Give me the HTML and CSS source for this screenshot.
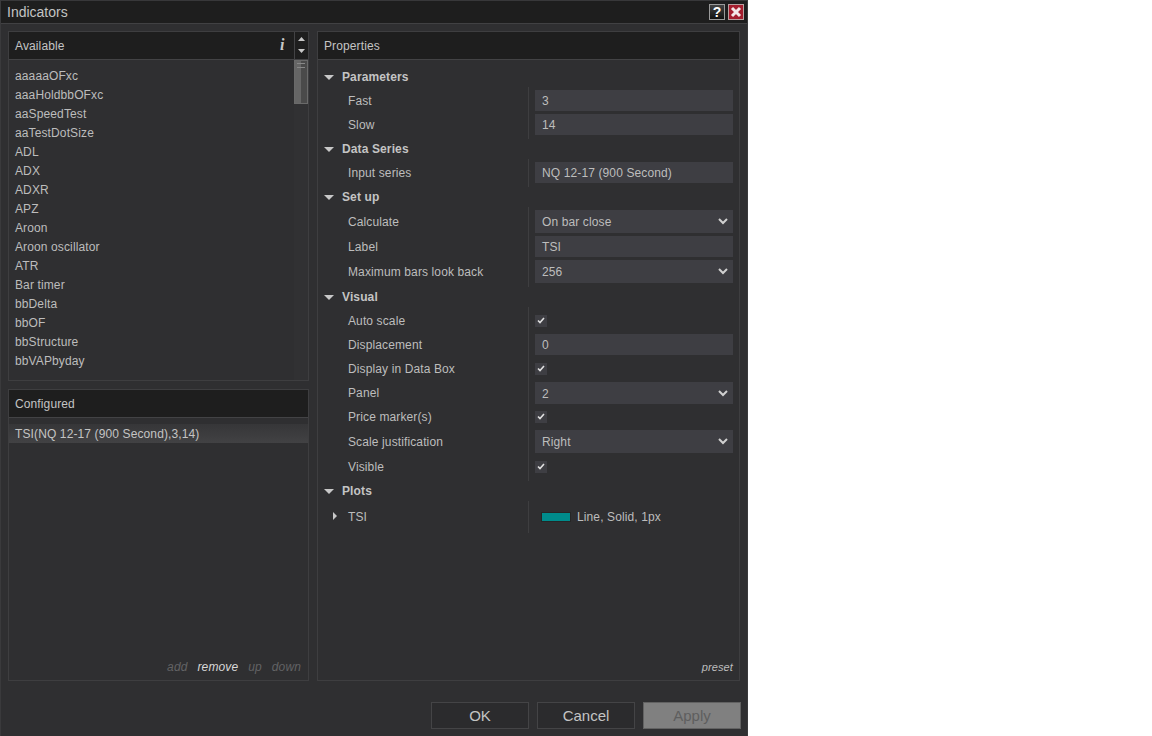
FILE: index.html
```html
<!DOCTYPE html>
<html lang="en">
<head>
    <meta charset="UTF-8">
    <title>Indicators</title>
    <link rel="stylesheet" href="styles.css">
</head>
<body>

<div class="window">
    <div class="titlebar">
        <span class="title">Indicators</span>
        <span class="title-btn help">?</span>
        <span class="title-btn close">
            <svg width="12" height="12" viewBox="0 0 12 12"><path d="M2 2 L10 10 M10 2 L2 10" stroke="#f4e8e8" stroke-width="3" fill="none"/></svg>
        </span>
    </div>

    <div class="main">
        <div class="left">
            <!-- Available -->
            <div class="panel available">
                <div class="panel-head">
                    <span class="head-label">Available</span>
                    <span class="info">i</span>
                    <span class="sort">
                        <svg width="7" height="4" viewBox="0 0 7 4"><path d="M0 4 L3.5 0 L7 4 Z" fill="#c8c8c8"/></svg>
                        <svg width="7" height="4" viewBox="0 0 7 4"><path d="M0 0 L3.5 4 L7 0 Z" fill="#c8c8c8"/></svg>
                    </span>
                </div>
                <div class="list-wrap">
                    <ul class="list">
                        <li>aaaaaOFxc</li>
                        <li>aaaHoldbbOFxc</li>
                        <li>aaSpeedTest</li>
                        <li>aaTestDotSize</li>
                        <li>ADL</li>
                        <li>ADX</li>
                        <li>ADXR</li>
                        <li>APZ</li>
                        <li>Aroon</li>
                        <li>Aroon oscillator</li>
                        <li>ATR</li>
                        <li>Bar timer</li>
                        <li>bbDelta</li>
                        <li>bbOF</li>
                        <li>bbStructure</li>
                        <li>bbVAPbyday</li>
                    </ul>
                    <div class="scroll-track"><div class="scroll-thumb"></div></div>
                </div>
            </div>

            <!-- Configured -->
            <div class="panel configured">
                <div class="panel-head"><span class="head-label">Configured</span></div>
                <div class="config-body">
                    <div class="config-row">TSI(NQ 12-17 (900 Second),3,14)</div>
                </div>
                <div class="actions">
                    <span class="off">add</span>
                    <span class="on">remove</span>
                    <span class="off">up</span>
                    <span class="off">down</span>
                </div>
            </div>
        </div>

        <!-- Properties -->
        <div class="panel props">
            <div class="panel-head"><span class="head-label">Properties</span></div>
            <div class="props-body">
                <div class="heading"><span class="caret"></span>Parameters</div>
                <div class="group">
                    <div class="row"><span class="name">Fast</span><div class="field">3</div></div>
                    <div class="row"><span class="name">Slow</span><div class="field">14</div></div>
                </div>

                <div class="heading"><span class="caret"></span>Data Series</div>
                <div class="group">
                    <div class="row"><span class="name">Input series</span><div class="field">NQ 12-17 (900 Second)</div></div>
                </div>

                <div class="heading"><span class="caret"></span>Set up</div>
                <div class="group">
                    <div class="row tall"><span class="name">Calculate</span><div class="field select">On bar close<svg class="chev" width="10" height="7" viewBox="0 0 10 7"><path d="M1 1 L5 5 L9 1" stroke="#d0d0d0" stroke-width="2" fill="none"/></svg></div></div>
                    <div class="row"><span class="name">Label</span><div class="field">TSI</div></div>
                    <div class="row tall"><span class="name">Maximum bars look back</span><div class="field select">256<svg class="chev" width="10" height="7" viewBox="0 0 10 7"><path d="M1 1 L5 5 L9 1" stroke="#d0d0d0" stroke-width="2" fill="none"/></svg></div></div>
                </div>

                <div class="heading"><span class="caret"></span>Visual</div>
                <div class="group">
                    <div class="row"><span class="name">Auto scale</span><span class="check"><svg width="8" height="7" viewBox="0 0 8 7"><path d="M1 3.5 L3 5.5 L7 1" stroke="#e0e0e0" stroke-width="1.6" fill="none"/></svg></span></div>
                    <div class="row"><span class="name">Displacement</span><div class="field">0</div></div>
                    <div class="row"><span class="name">Display in Data Box</span><span class="check"><svg width="8" height="7" viewBox="0 0 8 7"><path d="M1 3.5 L3 5.5 L7 1" stroke="#e0e0e0" stroke-width="1.6" fill="none"/></svg></span></div>
                    <div class="row"><span class="name">Panel</span><div class="field select">2<svg class="chev" width="10" height="7" viewBox="0 0 10 7"><path d="M1 1 L5 5 L9 1" stroke="#d0d0d0" stroke-width="2" fill="none"/></svg></div></div>
                    <div class="row"><span class="name">Price marker(s)</span><span class="check"><svg width="8" height="7" viewBox="0 0 8 7"><path d="M1 3.5 L3 5.5 L7 1" stroke="#e0e0e0" stroke-width="1.6" fill="none"/></svg></span></div>
                    <div class="row tall"><span class="name">Scale justification</span><div class="field select">Right<svg class="chev" width="10" height="7" viewBox="0 0 10 7"><path d="M1 1 L5 5 L9 1" stroke="#d0d0d0" stroke-width="2" fill="none"/></svg></div></div>
                    <div class="row"><span class="name">Visible</span><span class="check"><svg width="8" height="7" viewBox="0 0 8 7"><path d="M1 3.5 L3 5.5 L7 1" stroke="#e0e0e0" stroke-width="1.6" fill="none"/></svg></span></div>
                </div>

                <div class="heading"><span class="caret"></span>Plots</div>
                <div class="group">
                    <div class="row plot">
                        <span class="name"><span class="caret-right"></span>TSI</span>
                        <span class="plot-value"><span class="swatch"></span>Line, Solid, 1px</span>
                    </div>
                </div>
            </div>
            <div class="preset">preset</div>
        </div>
    </div>

    <div class="footer">
        <button class="btn">OK</button>
        <button class="btn">Cancel</button>
        <button class="btn apply">Apply</button>
    </div>
</div>

</body>
</html>
```

FILE: styles.css
```css
body {
    margin: 0;
    background-color: #fff;
    font-family: "Liberation Sans", Arial, sans-serif;
    font-size: 12px;
    letter-spacing: 0.12px;
    color: #bdbdbd;
}

.window {
    width: 748px;
    height: 736px;
    box-sizing: border-box;
    background-color: #2f2f31;
    border-left: 1px solid #3a3a3c;
    border-right: 1px solid #3a3a3c;
    display: flex;
    flex-direction: column;
}

/* title bar */
.titlebar {
    height: 24px;
    box-sizing: border-box;
    background-color: #1e1e1e;
    border-top: 1px solid #38383a;
    border-bottom: 1px solid #414143;
    display: flex;
    align-items: center;
    padding: 0 3px 0 6px;
    flex-shrink: 0;
}

.title {
    font-size: 14px;
    letter-spacing: 0;
    color: #c4c4c4;
    flex: 1;
}

.title-btn {
    width: 16px;
    height: 16px;
    box-sizing: border-box;
    margin-left: 3px;
    display: flex;
    align-items: center;
    justify-content: center;
}

.help {
    background: linear-gradient(#444, #111);
    border: 1px solid #9a9a9a;
    color: #fff;
    font-weight: bold;
    font-size: 14px;
}

.close {
    background-color: #a41e2e;
    border: 1px solid #b8a0a0;
}

/* main area */
.main {
    flex: 1;
    display: flex;
    gap: 8px;
    padding: 7px 7px 0 7px;
    min-height: 0;
}

.left {
    width: 301px;
    display: flex;
    flex-direction: column;
    gap: 8px;
}

.panel {
    box-sizing: border-box;
    border: 1px solid #3e3e40;
    display: flex;
    flex-direction: column;
}

.panel-head {
    height: 28px;
    box-sizing: border-box;
    background-color: #1e1e1e;
    border-bottom: 1px solid #434345;
    display: flex;
    align-items: center;
    padding-left: 6px;
    flex-shrink: 0;
}

.head-label {
    flex: 1;
    color: #c4c4c4;
}

/* available list */
.available {
    height: 350px;
}

.info {
    font-family: "Liberation Serif", serif;
    font-style: italic;
    font-weight: bold;
    font-size: 16px;
    color: #c8c8c8;
    width: 14px;
    margin-bottom: 2px;
}

.sort {
    width: 14px;
    height: 100%;
    border-left: 1px solid #434345;
    display: flex;
    flex-direction: column;
    align-items: center;
    justify-content: space-between;
    padding: 5px 0 6px;
    box-sizing: border-box;
}

.list-wrap {
    flex: 1;
    display: flex;
    min-height: 0;
}

.list {
    flex: 1;
    list-style: none;
    margin: 0;
    padding: 7px 0 0 6px;
}

.list li {
    height: 19px;
    line-height: 19px;
}

.scroll-track {
    width: 14px;
    background-color: #313133;
}

.scroll-thumb {
    height: 44px;
    box-sizing: border-box;
    border: 1px solid #6a6a6a;
    background: linear-gradient(90deg, #666 0, #666 50%, #4a4a4a 50%, #4a4a4a 100%);
    position: relative;
}

.scroll-thumb::before {
    content: "";
    position: absolute;
    top: 2px;
    left: 2px;
    right: 2px;
    height: 3px;
    border-top: 1px solid #888;
    border-bottom: 1px solid #888;
}

/* configured list */
.configured {
    flex: 1;
}

.config-body {
    flex: 1;
    padding-top: 6px;
}

.config-row {
    height: 19px;
    line-height: 20px;
    padding-left: 6px;
    background: linear-gradient(#363638, #424244);
    color: #c4c4c4;
}

.actions {
    display: flex;
    justify-content: flex-end;
    gap: 10px;
    padding: 0 7px 6px 0;
    font-style: italic;
}

.actions .off {
    color: #626264;
}

.actions .on {
    color: #d8d8d8;
}

/* properties */
.props {
    flex: 1;
    position: relative;
}

.props-body {
    flex: 1;
    padding-top: 5px;
}

.heading {
    height: 24px;
    display: flex;
    align-items: center;
    font-weight: bold;
    color: #c4c4c4;
    padding-left: 6px;
}

.caret {
    width: 0;
    height: 0;
    border-left: 5px solid transparent;
    border-right: 5px solid transparent;
    border-top: 5px solid #c8c8c8;
    margin-right: 8px;
}

.group {
    position: relative;
}

.group::before {
    content: "";
    position: absolute;
    left: 210px;
    top: -2px;
    bottom: -2px;
    border-left: 1px solid #3e3e40;
}

.row {
    height: 24px;
    display: flex;
    align-items: center;
    padding: 0 6px 0 30px;
}

.row.tall {
    height: 26px;
}

.row.plot {
    height: 28px;
}

.name {
    width: 187px;
    flex-shrink: 0;
    position: relative;
}

.field {
    flex: 1;
    height: 21px;
    line-height: 23px;
    background-color: #3e3e43;
    padding-left: 7px;
    margin-bottom: 1px;
    position: relative;
}

.field.select {
    height: 23px;
    line-height: 25px;
}

.row:not(.tall) .field.select {
    height: 22px;
    line-height: 24px;
}

.chev {
    position: absolute;
    right: 5px;
    top: 8px;
}

.check {
    width: 12px;
    height: 12px;
    background-color: #3e3e43;
    margin-bottom: 1px;
    display: flex;
    align-items: center;
    justify-content: center;
}

.caret-right {
    position: absolute;
    left: -15px;
    top: 2px;
    width: 0;
    height: 0;
    border-top: 4px solid transparent;
    border-bottom: 4px solid transparent;
    border-left: 4px solid #c8c8c8;
}

.plot-value {
    display: flex;
    align-items: center;
    padding-left: 6px;
}

.swatch {
    width: 30px;
    height: 10px;
    box-sizing: border-box;
    background-color: #008b8b;
    border: 1px solid #262626;
    margin-right: 6px;
}

.preset {
    text-align: right;
    font-style: italic;
    font-size: 11px;
    padding: 0 6px 7px 0;
    color: #bdbdbd;
}

/* footer buttons */
.footer {
    height: 55px;
    box-sizing: border-box;
    display: flex;
    justify-content: flex-end;
    gap: 8px;
    padding: 21px 6px 7px 0;
    flex-shrink: 0;
}

.btn {
    width: 98px;
    height: 27px;
    box-sizing: border-box;
    background-color: #2b2b2d;
    border: 1px solid #444446;
    color: #c4c4c4;
    font-family: "Liberation Sans", Arial, sans-serif;
    font-size: 15px;
    padding: 0;
}

.btn.apply {
    background-color: #808080;
    border: 1px solid #626262;
    color: #5e5e5e;
}
```
